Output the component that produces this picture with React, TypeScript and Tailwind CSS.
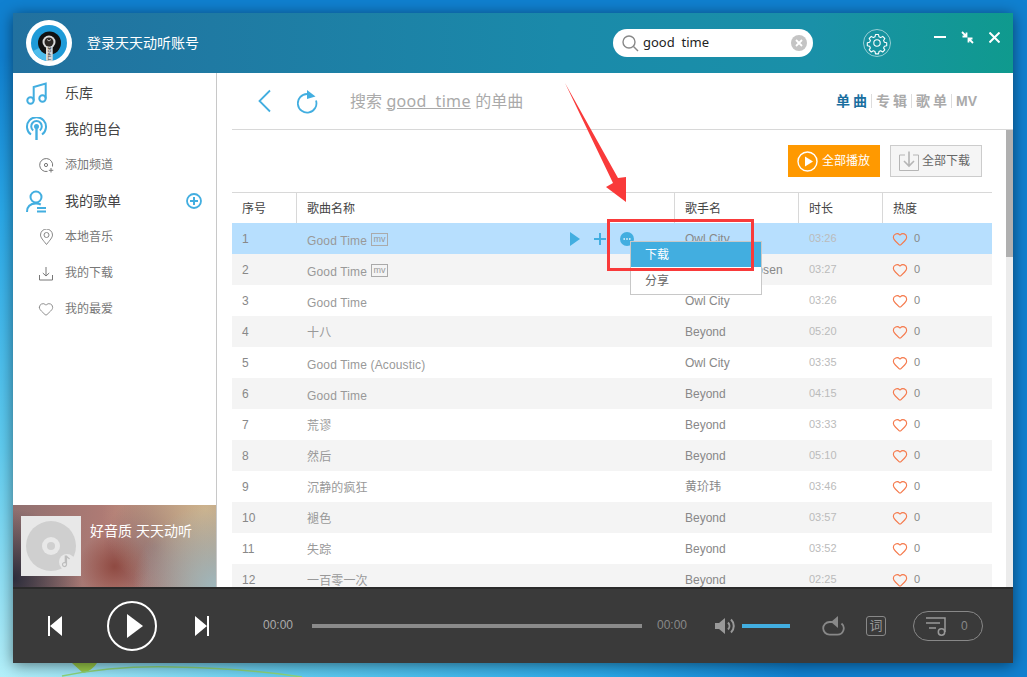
import { Heart } from "lucide-react";

const rows = [
  { n: 1, name: "Good Time", mv: true, artist: "Owl City", time: "03:26" },
  { n: 2, name: "Good Time", mv: true, artist: "Carly Rae Jepsen", time: "03:27" },
  { n: 3, name: "Good Time", artist: "Owl City", time: "03:26" },
  { n: 4, name: "十八", artist: "Beyond", time: "05:20" },
  { n: 5, name: "Good Time (Acoustic)", artist: "Owl City", time: "03:35" },
  { n: 6, name: "Good Time", artist: "Beyond", time: "04:15" },
  { n: 7, name: "荒谬", artist: "Beyond", time: "03:33" },
  { n: 8, name: "然后", artist: "Beyond", time: "05:10" },
  { n: 9, name: "沉静的疯狂", artist: "黄玠玮", time: "03:46" },
  { n: 10, name: "褪色", artist: "Beyond", time: "03:57" },
  { n: 11, name: "失踪", artist: "Beyond", time: "03:52" },
  { n: 12, name: "一百零一次", artist: "Beyond", time: "02:25" },
];

const font = "font-['Liberation_Sans','Noto_Sans_CJK_SC',sans-serif]";

const Logo = () => (
  <svg width="46" height="46" viewBox="0 0 46 46">
    <circle cx="23" cy="23" r="23" fill="#fff" />
    <circle cx="23" cy="23" r="18" fill="#1f9bd8" />
    <path d="M7 31a18 18 0 0 0 16 10V23z" fill="#4fbdec" />
    <circle cx="23.500" cy="23" r="11.500" fill="#111" />
    <circle cx="23" cy="22" r="6.500" fill="#d8d8d8" />
    <path d="M20 26h6.700v15.200a18 18 0 0 1-6.700-.6z" fill="#d8d8d8" />
    <circle cx="23" cy="22" r="4.500" fill="#2b2622" />
    <path d="M21 19.500l2 1.500 2-1.500" fill="none" stroke="#ddd" strokeWidth=".8" />
    <text x="-40.500" y="25" transform="rotate(-90)" fontSize="4.200" fontWeight="700" fill="#444">
      TTPOD
    </text>
  </svg>
);

const Gear = () => (
  <svg width="28" height="28" viewBox="0 0 28 28" fill="none" stroke="#fff">
    <circle cx="14" cy="14" r="13.500" strokeOpacity=".55" />
    <circle cx="14" cy="14" r="3.200" strokeWidth="1.100" />
    <path
      strokeWidth="1.100"
      strokeLinejoin="round"
      d="M12.500 5.500h3l.5 2.300 1.700.8 2-1.200 2.100 2.100-1.200 2 .8 1.700 2.300.5v3l-2.300.5-.8 1.700 1.200 2-2.100 2.100-2-1.200-1.700.8-.5 2.300h-3l-.5-2.300-1.700-.8-2 1.200-2.100-2.100 1.200-2-.8-1.700-2.300-.5v-3l2.300-.5.8-1.700-1.200-2 2.100-2.100 2 1.200 1.700-.8z"
    />
  </svg>
);

const Sidebar = () => (
  <div className="w-[204px] shrink-0 flex flex-col bg-white border-r border-[#c8c8c8]">
    <div className="flex-1 pt-[2px]">
      <div className="h-[36px] flex items-center text-[14px] text-[#444]">
        <svg className="ml-[13px] mr-[18px]" width="21" height="23" viewBox="0 0 21 23" fill="none" stroke="#42aee0" strokeWidth="2">
          <circle cx="4.500" cy="18.500" r="3.200" />
          <circle cx="16.500" cy="16.500" r="3.200" />
          <path d="M7.700 18.500V5l12-3.500v15" />
        </svg>
        乐库
      </div>
      <div className="h-[36px] flex items-center text-[14px] text-[#444]">
        <svg className="ml-[13px] mr-[18px]" width="21" height="24" viewBox="0 0 21 24" fill="none" stroke="#42aee0" strokeWidth="2">
          <path d="M5 17.500a9.500 9.500 0 1 1 11 0" />
          <path d="M7.200 13.500a5.300 5.300 0 1 1 6.600 0" />
          <circle cx="10.500" cy="9.500" r="1.500" fill="#42aee0" />
          <path d="M10.500 11v12" strokeWidth="2.400" />
        </svg>
        我的电台
      </div>
      <div className="h-[36px] flex items-center text-[12px] text-[#777]">
        <svg className="ml-[26px] mr-[11px]" width="15" height="15" viewBox="0 0 15 15" fill="none" stroke="#777">
          <path d="M13.500 8.500A6.500 6.500 0 1 0 8.500 13.400" />
          <circle cx="7" cy="7" r="1.600" />
          <path d="M12 10v4.500M9.800 12.300h4.500" />
        </svg>
        添加频道
      </div>
      <div className="h-[36px] flex items-center text-[14px] text-[#444] relative">
        <svg className="ml-[13px] mr-[18px]" width="21" height="23" viewBox="0 0 21 23" fill="none" stroke="#42aee0" strokeWidth="2">
          <circle cx="10" cy="7" r="5.500" />
          <path d="M1 22c0-5 3-8.500 9-8.500 2 0 3.500.4 4.800 1" />
          <path d="M11 18h9M11 21.500h9" />
        </svg>
        我的歌单
        <svg className="absolute left-[173px] top-[10px]" width="16" height="16" viewBox="0 0 16 16" fill="none" stroke="#42aee0">
          <circle cx="8" cy="8" r="7" strokeWidth="1.800" />
          <path d="M8 4v8M4 8h8" strokeWidth="2" />
        </svg>
      </div>
      <div className="h-[36px] flex items-center text-[12px] text-[#777]">
        <svg className="ml-[26px] mr-[11px]" width="15" height="16" viewBox="0 0 15 16" fill="none" stroke="#888">
          <path d="M7.500 15.500C4 11 1.500 8.500 1.500 6a6 6 0 0 1 12 0c0 2.500-2.500 5-6 9.500z" />
          <circle cx="7.500" cy="6" r="2.500" />
        </svg>
        本地音乐
      </div>
      <div className="h-[36px] flex items-center text-[12px] text-[#777]">
        <svg className="ml-[26px] mr-[11px]" width="15" height="15" viewBox="0 0 15 15" fill="none" stroke="#777">
          <path d="M.500 9v5h13V9M7 1v9M3.800 7 7 10l3.200-3" />
        </svg>
        我的下载
      </div>
      <div className="h-[36px] flex items-center text-[12px] text-[#777]">
        <Heart className="ml-[25px] mr-[11px]" size={16} color="#888" strokeWidth={1.400} />
        我的最爱
      </div>
    </div>
    <div className="h-[82px] flex items-center pl-[8px] bg-[radial-gradient(circle_at_100%_100%,#9fb8bd_0%,transparent_38%),radial-gradient(circle_at_95%_5%,#cdb38d_0%,transparent_50%),radial-gradient(circle_at_0%_90%,#2c2c3a_0%,transparent_32%),radial-gradient(circle_at_50%_75%,#8f4a42_0%,transparent_30%),radial-gradient(circle_at_70%_50%,#7d5a68_0%,transparent_35%),linear-gradient(90deg,#8f7070,#b27c75_50%,#a07a70)]">
      <div className="w-[60px] h-[60px] bg-[#e8e8e8] flex items-center justify-center">
        <svg width="52" height="52" viewBox="0 0 52 52">
          <circle cx="26" cy="26" r="25" fill="#cfcfcf" />
          <circle cx="26" cy="26" r="9" fill="#e8e8e8" />
          <circle cx="26" cy="26" r="4" fill="#cfcfcf" />
          <circle cx="42" cy="42" r="8" fill="#e8e8e8" />
          <path d="M41.500 36v8.500a2 2 0 1 1-1.200-1.800V36h1.200c.4 1.500 2 2 3 3" fill="none" stroke="#bdbdbd" strokeWidth="1.200" />
        </svg>
      </div>
      <div className="ml-[9px] mb-[30px] text-[14px] text-white">好音质 天天动听</div>
    </div>
  </div>
);

const Toolbar = () => (
  <div className="h-[57px] ml-[15px] border-b border-[#d8d8d8] flex items-center">
    <svg className="ml-[25px]" width="15" height="24" viewBox="0 0 15 24" fill="none" stroke="#42aee0" strokeWidth="1.800">
      <path d="M13 1.500 2.500 12 13 22.500" />
    </svg>
    <svg className="ml-[25px] mt-[2px]" width="21" height="24" viewBox="0 0 21 24" fill="none">
      <path d="M19 10.500A9.300 9.300 0 1 1 10 4" stroke="#42aee0" strokeWidth="1.800" />
      <path d="M10 0 18.500 6.500 10 9z" fill="#42aee0" />
    </svg>
    <div className="ml-[32px] text-[16px] text-[#aaa]">
      搜索 <span className="underline font-['Noto_Sans',sans-serif] tracking-[0.3px]">good&nbsp;&nbsp;time</span> 的单曲
    </div>
    <div className="ml-auto mr-[36px] flex items-center text-[14px] font-bold tracking-[3px] text-[#aaa]">
      <span className="text-[#1b6f9f]">单曲</span>
      <span className="w-px h-[14px] bg-[#ddd] ml-[1px] mr-[4px]" />
      <span>专辑</span>
      <span className="w-px h-[14px] bg-[#ddd] ml-[1px] mr-[4px]" />
      <span>歌单</span>
      <span className="w-px h-[14px] bg-[#ddd] ml-[1px] mr-[4px]" />
      <span className="tracking-normal">MV</span>
    </div>
  </div>
);

const Actions = () => (
  <div className="h-[62px] pr-[31px] pt-[15px] flex justify-end gap-[10px]">
    <div className="w-[92px] h-[32px] bg-[#ff9900] flex items-center text-[12px] text-white">
      <svg className="ml-[9px] mr-[4px]" width="21" height="21" viewBox="0 0 21 21" fill="none">
        <circle cx="10.500" cy="10.500" r="9.500" stroke="#fff" strokeWidth="1.400" />
        <path d="M8 5.500 16 10.500 8 15.500z" fill="#fff" />
      </svg>
      全部播放
    </div>
    <div className="w-[92px] h-[32px] bg-[#f5f5f5] border border-[#ccc] flex items-center text-[12px] text-[#666]">
      <svg className="ml-[8px] mr-[3px]" width="20" height="20" viewBox="0 0 20 20" fill="none" stroke="#b5b5b5">
        <path d="M6 4H.500v15.500h19V4H14" />
        <path d="M10 .500v14M5 10l5 5 5-5" strokeWidth="1.600" />
      </svg>
      全部下载
    </div>
  </div>
);

const SongTable = () => (
  <div className="ml-[15px] mr-[21px] flex-1 overflow-hidden">
    <div className="grid grid-cols-[64px_378px_124px_84px_110px] h-[31px] border-t border-[#d8d8d8] text-[12px] text-[#444] items-stretch">
      <div className="pl-[10px] pt-[2px] flex items-center">序号</div>
      <div className="pl-[10px] pt-[2px] flex items-center border-l border-[#d8d8d8]">歌曲名称</div>
      <div className="pl-[10px] pt-[2px] flex items-center border-l border-[#d8d8d8]">歌手名</div>
      <div className="pl-[10px] pt-[2px] flex items-center border-l border-[#d8d8d8]">时长</div>
      <div className="pl-[10px] pt-[2px] flex items-center border-l border-[#d8d8d8]">热度</div>
    </div>
    {rows.map((r) => (
      <div
        key={r.n}
        className={
          "grid grid-cols-[64px_378px_124px_84px_110px] h-[31px] items-center text-[12px] " +
          (r.n === 1 ? "bg-[#b7dffe]" : r.n % 2 === 0 ? "bg-[#f4f4f4]" : "bg-white")
        }
      >
        <div className="pl-[10px] text-[#888]">{r.n}</div>
        <div
          className={
            "pl-[11px] pr-[40px] flex items-center text-[#999] tracking-[0.15px] " +
            (r.name.startsWith("Good") ? "pt-[4px]" : "pt-[2px]")
          }
        >
          <span>{r.name}</span>
          {r.mv && (
            <span className="ml-[4px] -mt-[2px] w-[17px] h-[13px] border border-[#aaa] text-[9px] leading-[10px] tracking-normal text-[#999] text-center">
              mv
            </span>
          )}
          {r.n === 1 && (
            <div className="ml-auto -mt-[4px] flex items-center">
              <svg width="10" height="14" viewBox="0 0 10 14">
                <path d="M0 0 10 7 0 14z" fill="#42aee0" />
              </svg>
              <svg className="ml-[14px]" width="12" height="12" viewBox="0 0 12 12">
                <path d="M6 0v12M0 6h12" stroke="#42aee0" strokeWidth="2" />
              </svg>
              <svg className="ml-[14px]" width="14" height="14" viewBox="0 0 14 14">
                <circle cx="7" cy="7" r="7" fill="#42aee0" />
                <path d="M3.500 7h1.400M6.300 7h1.400M9.100 7h1.400" stroke="#fff" strokeWidth="1.500" />
              </svg>
            </div>
          )}
        </div>
        <div className={"pl-[11px] text-[#888] whitespace-nowrap " + (r.n === 2 ? "tracking-[0.15px]" : "")}>{r.artist}</div>
        <div className="pl-[11px] text-[11px] text-[#bbb]">{r.time}</div>
        <div className="pl-[10px] flex items-center text-[#888] text-[11px]">
          <Heart size={16} color="#f5784a" strokeWidth={1.700} />
          <span className="ml-[6px]">0</span>
        </div>
      </div>
    ))}
  </div>
);

const Player = () => (
  <div className="h-[76px] shrink-0 bg-[#3a3a3a] border-t-2 border-[#2a2a2a] flex items-center text-[12px] text-[#aaa]">
    <svg className="ml-[35px]" width="14" height="20" viewBox="0 0 14 20" fill="#fff">
      <path d="M0 0h2v20H0zM14 0v20L2 10z" />
    </svg>
    <svg className="ml-[45px]" width="50" height="50" viewBox="0 0 50 50" fill="none">
      <circle cx="25" cy="25" r="24" stroke="#fff" strokeWidth="2" />
      <path d="M20 13 36 25 20 37z" fill="#fff" />
    </svg>
    <svg className="ml-[38px]" width="14" height="20" viewBox="0 0 14 20" fill="#fff">
      <path d="M12 0h2v20h-2zM0 0v20L12 10z" />
    </svg>
    <span className="ml-[54px] w-[31px] -mt-[2px]">00:00</span>
    <div className="ml-[18px] w-[330px] h-[4px] bg-[#8a8a8a]" />
    <span className="ml-[15px] w-[31px] -mt-[2px] text-[#888]">00:00</span>
    <svg className="ml-[27px]" width="20" height="18" viewBox="0 0 20 18" fill="none">
      <path d="M0 6h4l6-5v16l-6-5H0z" fill="#999" />
      <path d="M13 5.500a5 5 0 0 1 0 7M16 2.500a9 9 0 0 1 0 13" stroke="#999" strokeWidth="2" />
    </svg>
    <div className="ml-[7px] w-[48px] h-[4px] bg-[#42aee0]" />
    <svg className="ml-[32px]" width="23" height="20" viewBox="0 0 23 20" fill="none">
      <path d="M11 6H7.500a6.300 6.300 0 0 0 0 12.600h8A6.300 6.300 0 0 0 19.500 7.500" stroke="#888" strokeWidth="1.800" />
      <path d="M16 0v12L9 6z" fill="#888" />
    </svg>
    <div className="ml-[21px] w-[20px] h-[20px] border border-[#888] rounded-[3px] flex items-center justify-center text-[13px] text-[#999]">
      词
    </div>
    <div className="ml-[27px] w-[70px] h-[30px] border border-[#888] rounded-full flex items-center text-[#888] text-[12px]">
      <svg className="ml-[12px]" width="21" height="20" viewBox="0 0 21 20" fill="none" stroke="#999" strokeWidth="1.500">
        <path d="M0 2h19v14M0 7h14M3 12h7" />
        <circle cx="15.500" cy="16" r="3.200" />
      </svg>
      <span className="ml-[14px]">0</span>
    </div>
  </div>
);

export default function App() {
  return (
    <div
      className={
        "relative w-[1027px] h-[677px] overflow-hidden p-[13px] pb-[14px] " +
        font +
        " bg-[radial-gradient(ellipse_800px_620px_at_0%_100%,#b4f0fa_0%,#60ccf0_37%,#2aa8e8_75%,#1080d0_100%),linear-gradient(90deg,#0b6cc2,#0966bd)]"
      }
    >
      {/* wallpaper leaf */}
      <svg className="absolute left-0 bottom-0" width="320" height="16" viewBox="0 0 320 16" fill="none">
        <path d="M72 2h25c-3 5-9 9-14 10z" fill="#9acb4a" />
        <path d="M62 15c30-6 70-10 110-9 50 1 90 4 130 10" stroke="#8fd67c" strokeWidth="1.500" />
      </svg>
      <div className="relative w-[1000px] h-[650px] flex flex-col shadow-[0_2px_14px_rgba(0,0,0,0.5)]">
        <div className="h-[60px] shrink-0 flex items-center bg-[linear-gradient(90deg,#22719f_0%,#1a8aaa_55%,#1a90a8_80%,#0f9a8e_100%)]">
          <div className="ml-[13px] flex">
            <Logo />
          </div>
          <span className="ml-[15px] text-[14px] text-white">登录天天动听账号</span>
          <div className="ml-[414px] w-[200px] h-[28px] bg-white rounded-full flex items-center font-['Noto_Sans',sans-serif] text-[13px] text-[#222]">
            <svg className="ml-[9px]" width="17" height="17" viewBox="0 0 17 17" fill="none" stroke="#888" strokeWidth="1.400">
              <circle cx="7" cy="7" r="6" />
              <path d="m11.500 11.500 4.500 4.500" />
            </svg>
            <span className="ml-[4px] whitespace-pre">good  time</span>
            <svg className="ml-auto mr-[6px]" width="16" height="16" viewBox="0 0 16 16">
              <circle cx="8" cy="8" r="8" fill="#c4c4c4" />
              <path d="m5 5 6 6M11 5l-6 6" stroke="#fff" strokeWidth="1.800" />
            </svg>
          </div>
          <div className="ml-[50px]">
            <Gear />
          </div>
          <div className="ml-[43px] mb-[12px] flex items-center gap-[15px]">
            <svg width="12" height="12" viewBox="0 0 12 12">
              <path d="M0 6h12" stroke="#fff" strokeWidth="2" />
            </svg>
            <svg width="13" height="13" viewBox="0 0 13 13" fill="none" stroke="#fff" strokeWidth="1.800">
              <path d="M1 1l4 4M5.500 1.500v4h-4M12 12 8 8M7.500 11.500v-4h4" />
            </svg>
            <svg width="11" height="11" viewBox="0 0 11 11">
              <path d="m.500 .500 10 10M10.500 .500l-10 10" stroke="#fff" strokeWidth="2" />
            </svg>
          </div>
        </div>
        <div className="flex-1 min-h-0 flex">
          <Sidebar />
          <div className="relative flex-1 min-w-0 flex flex-col bg-white">
            <Toolbar />
            <Actions />
            <SongTable />
            <div className="absolute right-0 top-[57px] bottom-0 w-[7px] bg-[#ececec]">
              <div className="h-[127px] bg-[#b0b0b0]" />
            </div>
          </div>
        </div>
        <Player />
      </div>

      {/* dropdown */}
      <div className="absolute left-[630px] top-[241px] w-[132px] h-[54px] bg-white border border-[#c8c8c8] text-[12px] text-[#666]">
        <div className="h-[25px] pl-[14px] flex items-center bg-[#42aee0] text-white">下载</div>
        <div className="h-[27px] pl-[14px] flex items-center">分享</div>
      </div>
      {/* annotation */}
      <div className="absolute left-[607px] top-[219px] w-[147px] h-[52px] border-[3px] border-[#f93a3a]" />
      <svg className="absolute left-[560px] top-[78px]" width="72" height="126" viewBox="0 0 72 126">
        <path d="M5 5 58 100 66 99 66 124 46 109 53 105z" fill="#f93a3a" />
      </svg>
    </div>
  );
}
